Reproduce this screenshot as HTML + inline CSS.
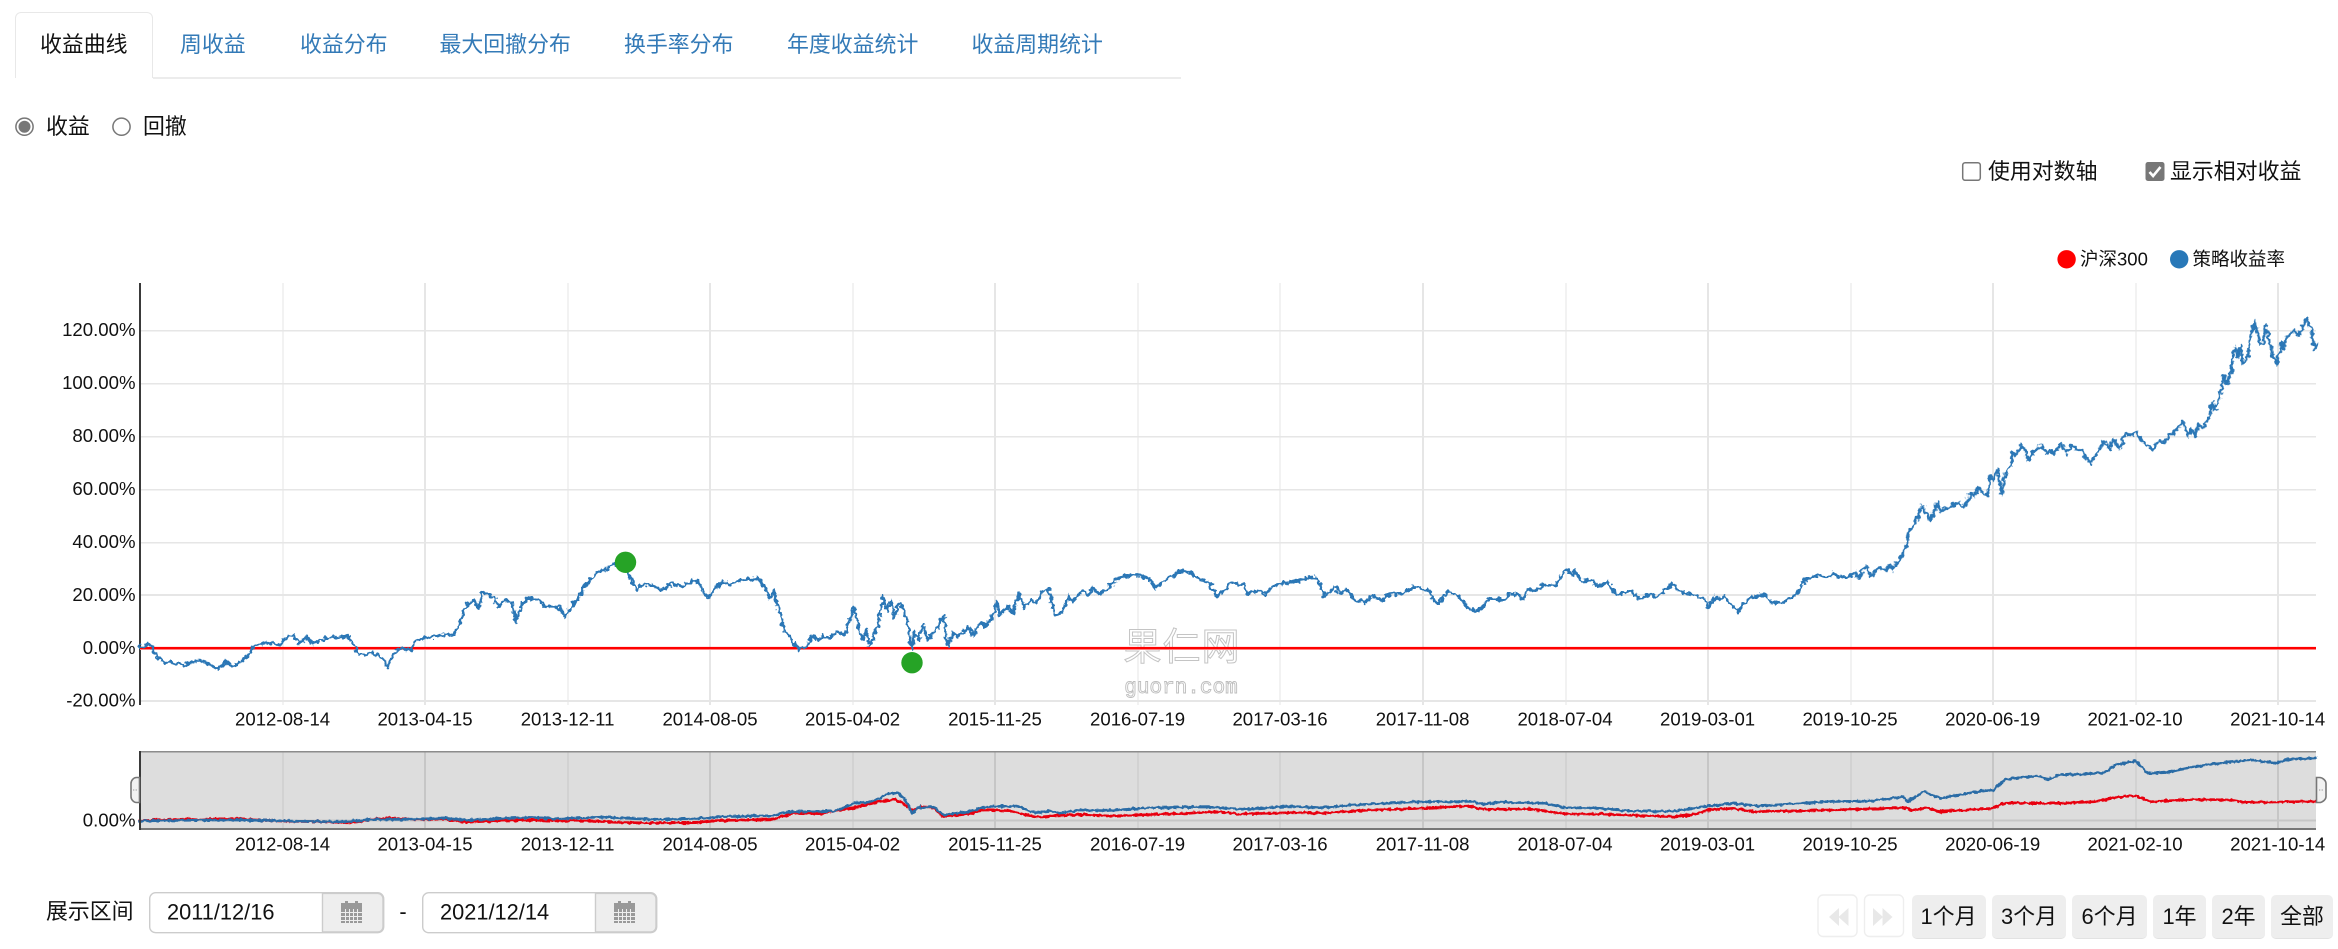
<!DOCTYPE html>
<html lang="zh"><head><meta charset="utf-8"><title>收益曲线</title>
<style>
html,body{margin:0;padding:0;background:#fff}
body{width:2338px;height:949px;overflow:hidden;position:relative;font-family:"Liberation Sans","Noto Sans CJK SC",sans-serif;color:#111}
.t{position:absolute;white-space:nowrap;font-size:21.9px;line-height:30px;height:30px}
.tab{color:#337ab7}
.box{position:absolute;box-sizing:border-box}
.btn{position:absolute;top:895px;height:44px;background:#eee;border-radius:5px;font-size:21.9px;line-height:43px;text-align:center;color:#111;border-bottom:1px solid #e2e2e2;box-sizing:border-box}
svg{position:absolute;left:0;top:0}
svg text{font-family:"Liberation Sans","Noto Sans CJK SC",sans-serif;fill:#111}
.ax text{font-size:18.6px}
.b,.r,.mb{fill:none;vector-effect:non-scaling-stroke;stroke-linejoin:round;stroke-linecap:round}
.b{stroke:#2b77b6;stroke-width:2.8}
.mb{stroke:#2a6ca6;stroke-width:2.6}
.r{stroke:#e8000f;stroke-width:2.6}
</style></head><body>
<div class="box" style="left:15px;top:12px;width:138px;height:66px;border:1.5px solid #e8e8e8;border-bottom:none;border-radius:6px 6px 0 0;background:#fff"></div>
<div class="box" style="left:153px;top:77px;width:1028px;height:1.5px;background:#ececec"></div>
<div class="t" style="left:40px;top:30px">收益曲线</div>
<div class="t tab" style="left:180px;top:30px">周收益</div>
<div class="t tab" style="left:300px;top:30px">收益分布</div>
<div class="t tab" style="left:439.500px;top:30px">最大回撤分布</div>
<div class="t tab" style="left:624px;top:30px">换手率分布</div>
<div class="t tab" style="left:787px;top:30px">年度收益统计</div>
<div class="t tab" style="left:971.500px;top:30px">收益周期统计</div>

<div class="t" style="left:46px;top:112px">收益</div>
<div class="t" style="left:143px;top:112px">回撤</div>
<div class="t" style="left:1988px;top:157px">使用对数轴</div>
<div class="t" style="left:2170px;top:157px">显示相对收益</div>

<svg width="2338" height="949" viewBox="0 0 2338 949">
<defs>
<filter id="j1" filterUnits="userSpaceOnUse" x="130" y="280" width="2200" height="430" color-interpolation-filters="sRGB">
<feTurbulence type="fractalNoise" baseFrequency="0.22" numOctaves="2" seed="4" result="n"/>
<feDisplacementMap in="SourceGraphic" in2="n" scale="7" xChannelSelector="G" yChannelSelector="R"/>
</filter>
<filter id="j2" filterUnits="userSpaceOnUse" x="130" y="745" width="2200" height="90" color-interpolation-filters="sRGB">
<feTurbulence type="fractalNoise" baseFrequency="0.25" numOctaves="2" seed="9" result="n"/>
<feDisplacementMap in="SourceGraphic" in2="n" scale="3.500" xChannelSelector="G" yChannelSelector="R"/>
</filter>
</defs>
<!-- radios -->
<circle cx="24.5" cy="126.7" r="8.6" fill="#fff" stroke="#777" stroke-width="1.5"/>
<circle cx="24.5" cy="126.7" r="6" fill="#777"/>
<circle cx="121.5" cy="126.7" r="8.6" fill="#fff" stroke="#777" stroke-width="1.5"/>
<!-- checks -->
<rect x="1962.7" y="162.7" width="17.6" height="17.6" rx="2.5" fill="#fff" stroke="#777" stroke-width="1.5"/>
<rect x="2145.5" y="162" width="19" height="19" rx="2.5" fill="#777"/>
<path d="M2149.5 172l3.6 4 7.4-9" fill="none" stroke="#fff" stroke-width="2.6"/>
<!-- legend -->
<circle cx="2066.6" cy="259.3" r="9.2" fill="#f00"/>
<text x="2080" y="265.5" font-size="18.5">沪深300</text>
<circle cx="2179.2" cy="259.3" r="9.2" fill="#2878b8"/>
<text x="2192.5" y="265.5" font-size="18.5">策略收益率</text>

<!-- main grid -->
<g shape-rendering="crispEdges" stroke="#e6e6e6" fill="none">
<g stroke-width="1">
<path d="M283 283V705M568 283V705M853 283V705M1138 283V705M1280 283V705M1566 283V705M1851 283V705M2136 283V705"/>
</g>
<g stroke-width="2">
<path d="M425 283V705M710 283V705M995 283V705M1423 283V705M1708 283V705M1993 283V705M2278 283V705"/>
</g>
<path stroke-width="1.5" d="M140 330.5H2316M140 383.5H2316M140 436.5H2316M140 489.5H2316M140 542.5H2316"/>
<path stroke-width="2" d="M140 595H2316M140 701H2316"/>
</g>
<rect x="139" y="283" width="2" height="422" fill="#3a3a3a"/>
<!-- y labels -->
<g class="ax" text-anchor="end">
<text x="135.5" y="336">120.00%</text>
<text x="135.5" y="389">100.00%</text>
<text x="135.5" y="442">80.00%</text>
<text x="135.5" y="495">60.00%</text>
<text x="135.5" y="548">40.00%</text>
<text x="135.5" y="601">20.00%</text>
<text x="135.5" y="654">0.00%</text>
<text x="135.5" y="706.5">-20.00%</text>
<text x="135.5" y="826.5">0.00%</text>
</g>
<!-- x labels -->
<g class="ax" text-anchor="middle">
<text x="282.6" y="725.5">2012-08-14</text><text x="425" y="725.5">2013-04-15</text><text x="567.6" y="725.5">2013-12-11</text><text x="710" y="725.5">2014-08-05</text><text x="852.6" y="725.5">2015-04-02</text><text x="995" y="725.5">2015-11-25</text><text x="1137.6" y="725.5">2016-07-19</text><text x="1280" y="725.5">2017-03-16</text><text x="1422.6" y="725.5">2017-11-08</text><text x="1565" y="725.5">2018-07-04</text><text x="1707.6" y="725.5">2019-03-01</text><text x="1850" y="725.5">2019-10-25</text><text x="1992.7" y="725.5">2020-06-19</text><text x="2135" y="725.5">2021-02-10</text><text x="2277.7" y="725.5">2021-10-14</text>
<text x="282.6" y="850.5">2012-08-14</text><text x="425" y="850.5">2013-04-15</text><text x="567.6" y="850.5">2013-12-11</text><text x="710" y="850.5">2014-08-05</text><text x="852.6" y="850.5">2015-04-02</text><text x="995" y="850.5">2015-11-25</text><text x="1137.6" y="850.5">2016-07-19</text><text x="1280" y="850.5">2017-03-16</text><text x="1422.6" y="850.5">2017-11-08</text><text x="1565" y="850.5">2018-07-04</text><text x="1707.6" y="850.5">2019-03-01</text><text x="1850" y="850.5">2019-10-25</text><text x="1992.7" y="850.5">2020-06-19</text><text x="2135" y="850.5">2021-02-10</text><text x="2277.7" y="850.5">2021-10-14</text>
</g>
<!-- watermark -->
<g text-anchor="middle">
<text x="1182" y="660" font-size="38" style="fill:#fff;stroke:#c4c4c4;stroke-width:1;letter-spacing:1px">果仁网</text>
<text x="1181" y="693" font-size="21" style="font-family:'Liberation Mono',monospace;fill:#fff;stroke:#bdbdbd;stroke-width:.9">guorn.com</text>
</g>
<!-- zero line -->
<rect x="140" y="648.6" width="2176" height="1.4" fill="#ff8f8f"/>
<rect x="140" y="646.9" width="2176" height="2.2" fill="#f00"/>
<!-- strategy curve -->
<g filter="url(#j1)">
<polyline class="b" transform="translate(130,500) scale(.44643,.33333)" points="22,440 35,436 47,432 55,460 70,483 90,488 120,495 155,480 175,490 198,508 215,485 232,500 262,470 275,445 290,430 320,430 335,437 345,420 365,405 380,430 395,410 410,430 440,415 460,412 490,410 505,445 515,465 545,458 565,475 577,498 595,450 620,445 630,450 642,420 670,412 700,405 725,405 740,365 755,310 770,300 780,325 790,275 815,290 825,320 840,300 855,310 865,365 880,310 890,295 915,300 930,320 960,320 975,350 985,325 1005,295 1020,255 1050,215 1070,205 1085,190 1110,205 1120,230 1135,270 1150,250 1175,260 1190,270 1215,250 1235,260 1265,240 1277,252"/>
<polyline class="b" transform="translate(700,500) scale(.44643,.33333)" points="0,252 15,295 35,265 50,245 70,255 90,240 130,235 145,262 155,295 165,275 180,340 190,395 200,405 220,450 240,440 250,405 262,420 275,408 290,415 305,395 325,405 332,370 345,325 355,375 365,420 372,390 380,435 398,380 410,290 418,330 428,305 435,350 448,305 462,350 475,450 480,395 490,420 500,375 510,420 530,385 545,345 555,440 565,400 580,410 600,380 612,405 630,365 640,380 655,350 665,305 672,345 690,320 700,340 715,280 725,320 745,295 755,310 765,275 780,265 795,345 810,340 825,290 835,305 855,275 870,285 880,260 890,285 915,265 935,235 965,225 985,225 1005,235 1020,265 1040,240 1075,215 1095,215 1115,235 1140,250 1160,290 1190,250 1220,255 1227,283 1250,270 1265,285 1285,258 1325,245 1344,240"/>
<polyline class="b" transform="translate(1300,500) scale(.44643,.33333)" points="0,243 20,232 40,238 55,290 78,262 90,280 105,268 125,305 150,305 163,285 180,302 195,285 235,278 255,260 290,272 300,305 312,308 330,275 350,282 380,328 400,332 425,295 458,300 465,285 490,280 498,298 510,270 530,272 545,255 570,258 595,208 610,225 615,210 630,245 655,240 665,260 690,248 710,285 745,272 757,298 785,282 800,290 835,250 850,275 880,285 905,295 915,325 930,288 940,300 950,288 980,335 1005,295 1040,282 1060,310 1080,308 1115,280 1130,240 1165,225 1180,235 1195,220 1215,235 1232,228"/>
<polyline class="b" transform="translate(1850,290) scale(.33333)" points="0,857 12,850 25,862 45,832 52,830 62,858 90,832 105,842 118,825 125,840 155,800 170,760 178,725 195,700 205,675 215,648 232,670 240,690 250,670 262,640 272,665 300,650 325,637 340,650 355,635 360,610 375,615 385,592 410,620 420,560 427,570 443,538 455,612 468,545 480,530 490,485 497,495 515,467 525,478 535,510 550,485 575,468 590,490 600,480 612,492 633,460 650,490 665,465 680,480 695,480 720,520 745,485 762,455 780,475 790,447 810,475 825,430 840,435 860,425 875,455 910,478 920,455 945,455 960,435 980,418 1000,395 1015,435 1025,415 1035,438 1045,405 1060,415 1080,375 1085,335 1095,360 1110,320 1122,252 1130,280 1142,250 1150,190 1158,170 1163,200 1172,170 1178,220 1192,210 1203,130 1217,97 1222,130 1232,165 1240,160 1247,105 1256,140 1265,185 1280,225 1295,155 1300,180 1310,140 1335,122 1345,138 1370,85 1385,118 1392,175 1402,163"/>
</g>
<circle cx="625.5" cy="562.3" r="10.7" fill="#26a326"/>
<circle cx="912" cy="662.7" r="10.7" fill="#26a326"/>

<!-- navigator -->
<rect x="140" y="751" width="2176" height="78" fill="#ddd"/>
<g shape-rendering="crispEdges" stroke="#c6c6c6" fill="none">
<path stroke-width="1" d="M283 751V829M568 751V829M853 751V829M1138 751V829M1280 751V829M1566 751V829M1851 751V829M2136 751V829"/>
<path stroke-width="2" d="M425 751V829M710 751V829M995 751V829M1423 751V829M1708 751V829M1993 751V829M2278 751V829"/>
<path stroke-width="2" d="M140 820.5H2316"/>
</g>
<g filter="url(#j2)">
<polyline class="r" transform="translate(120,740) scale(.5102,.33333)" points="38,242 80,240 130,237 160,240 190,236 240,238 280,241 330,244 400,245 450,249 490,239 530,234 570,238 640,238 680,247 730,243 800,240 860,243 920,242 970,247 1040,249 1130,248 1160,242 1280,238 1300,228 1320,219 1370,221 1410,211 1440,202 1470,192 1490,184 1520,178 1535,190 1552,210 1568,205"/>
<polyline class="r" transform="translate(800,740) scale(.5102,.33333)" points="235,200 262,203 280,230 330,222 360,210 410,212 430,220 465,232 510,226 560,224 610,228 680,224 760,220 820,215 860,222 960,218 1030,219 1120,210 1220,205 1310,198 1340,208 1430,207 1500,222 1568,222"/>
<polyline class="r" transform="translate(1540,740) scale(.5089,.33333)" points="118,222 180,226 260,230 300,225 330,210 380,205 420,215 520,212 620,208 720,203 730,212 760,203 785,215 890,205 915,188 985,190 1020,190 1090,185 1130,172 1170,167 1200,185 1290,178 1360,180 1380,187 1450,186 1525,184"/>
<polyline class="mb" transform="translate(120,740) scale(.5102,.33333)" points="38,243 130,241 200,240 280,241 350,244 440,245 490,239 560,238 640,235 680,241 740,236 800,232 860,236 950,231 1010,236 1060,238 1140,235 1180,230 1280,227 1300,218 1340,214 1400,214 1440,190 1470,186 1490,175 1505,160 1525,160 1540,180 1552,220 1568,200"/>
<polyline class="mb" transform="translate(800,740) scale(.5102,.33333)" points="235,205 262,200 280,225 330,215 365,200 425,198 460,218 490,213 510,220 545,210 600,212 690,203 800,201 870,208 960,199 1020,203 1080,195 1200,186 1320,184 1340,193 1370,186 1460,190 1500,203 1568,205"/>
<polyline class="mb" transform="translate(1540,740) scale(.5089,.33333)" points="118,205 170,212 260,214 330,198 380,190 430,198 560,185 650,183 715,170 722,185 755,155 785,175 860,155 890,150 915,118 975,108 1000,118 1020,105 1060,103 1110,98 1130,75 1170,62 1195,100 1240,95 1270,85 1330,70 1400,60 1445,70 1470,58 1525,54"/>
</g>
<rect x="140" y="751" width="2176" height="1.5" fill="#8c8c8c"/>
<rect x="140" y="828" width="2176" height="2" fill="#777"/>
<rect x="139" y="751" width="2" height="79" fill="#3a3a3a"/>
<!-- handles -->
<path d="M139.5 777.5h-3c-3 0-5.5 3-5.5 6v13c0 3 2.500 6 5.500 6h3z" fill="#f2f2f2" stroke="#777" stroke-width="1.6"/>
<path d="M133 790h1.300M135.600 790h1.300" stroke="#999" stroke-width="1"/>
<path d="M2316.500 777.500h3c3 0 6.500 3 6.500 6v13c0 3-3.500 6-6.500 6h-3z" fill="#f2f2f2" stroke="#777" stroke-width="1.600"/>
<path d="M2319 790h1.300M2321.600 790h1.300" stroke="#999" stroke-width="1"/>

<!-- date inputs -->
<g>
<rect x="149.700" y="892.700" width="234" height="40" rx="6" fill="#fff" stroke="#ccc" stroke-width="1.400"/>
<path d="M322.500 893.400H377.700a5.300 5.300 0 0 1 5.300 5.300V926.700a5.300 5.300 0 0 1-5.300 5.300H322.500z" fill="#eee" stroke="#ccc" stroke-width="1.400"/>
<rect x="422.700" y="892.700" width="234" height="40" rx="6" fill="#fff" stroke="#ccc" stroke-width="1.400"/>
<path d="M595.500 893.400H650.700a5.300 5.300 0 0 1 5.300 5.300V926.700a5.300 5.300 0 0 1-5.300 5.300H595.500z" fill="#eee" stroke="#ccc" stroke-width="1.400"/>
</g>
<text x="167" y="919.500" font-size="21.800">2011/12/16</text>
<text x="440" y="919.500" font-size="21.800">2021/12/14</text>
<text x="403" y="919" font-size="21.800" text-anchor="middle">-</text>
<!-- calendar icons -->
<g fill="#999">
<path d="M341 905h21v18h-21z"/><rect x="345" y="901" width="3" height="4"/><rect x="355" y="901" width="3" height="4"/><rect x="341" y="903" width="21" height="5"/>
<path d="M614 905h21v18h-21z"/><rect x="618" y="901" width="3" height="4"/><rect x="628" y="901" width="3" height="4"/><rect x="614" y="903" width="21" height="5"/>
</g>
<g stroke="#eee" stroke-width="1" shape-rendering="crispEdges">
<path d="M341 912.500h21M341 916.500h21M341 920.500h21M345.500 909v14M349.500 909v14M353.500 909v14M357.500 909v14"/>
<path d="M614 912.500h21M614 916.500h21M614 920.500h21M618.500 909v14M622.500 909v14M626.500 909v14M630.500 909v14"/>
</g>
<!-- nav arrow buttons -->
<rect x="1818" y="895" width="39" height="41.500" rx="5" fill="#fff" stroke="#eee" stroke-width="1.400"/>
<rect x="1864.500" y="895" width="39" height="41.500" rx="5" fill="#fff" stroke="#eee" stroke-width="1.400"/>
<path d="M1839 908v18l-10-9zM1848.500 908v18l-10-9zM1873 908v18l10-9zM1882.500 908v18l10-9z" fill="#e8e8e8"/>
</svg>

<div class="t" style="left:46px;top:897px">展示区间</div>
<div class="btn" style="left:1911.500px;width:74px">1个月</div>
<div class="btn" style="left:1992px;width:74px">3个月</div>
<div class="btn" style="left:2072px;width:75px">6个月</div>
<div class="btn" style="left:2153px;width:53px">1年</div>
<div class="btn" style="left:2212px;width:53px">2年</div>
<div class="btn" style="left:2271px;width:62px">全部</div>
</body></html>
